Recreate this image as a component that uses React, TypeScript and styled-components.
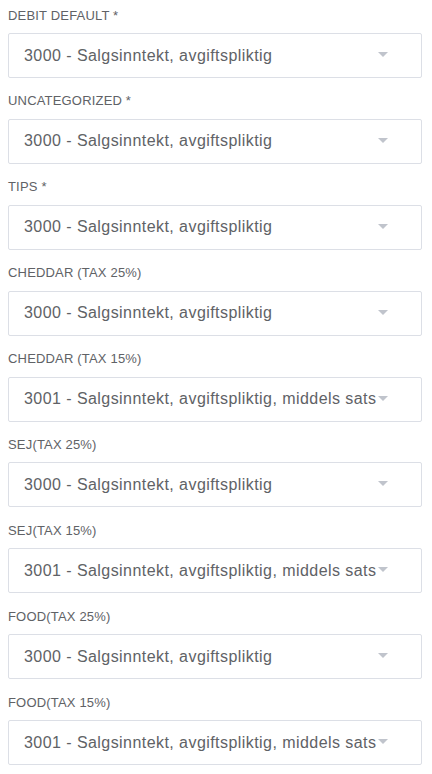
import styled, { createGlobalStyle } from 'styled-components';

const GlobalStyle = createGlobalStyle`
  html, body {
    margin: 0;
    padding: 0;
    background: #ffffff;
  }
  body {
    font-family: Arial, "Liberation Sans", Helvetica, sans-serif;
  }
`;

type Mapping = {
  label: string;
  value: string;
};

const mappings: Mapping[] = [
  { label: 'DEBIT DEFAULT *', value: '3000 - Salgsinntekt, avgiftspliktig' },
  { label: 'UNCATEGORIZED *', value: '3000 - Salgsinntekt, avgiftspliktig' },
  { label: 'TIPS *', value: '3000 - Salgsinntekt, avgiftspliktig' },
  { label: 'CHEDDAR (TAX 25%)', value: '3000 - Salgsinntekt, avgiftspliktig' },
  { label: 'CHEDDAR (TAX 15%)', value: '3001 - Salgsinntekt, avgiftspliktig, middels sats' },
  { label: 'SEJ(TAX 25%)', value: '3000 - Salgsinntekt, avgiftspliktig' },
  { label: 'SEJ(TAX 15%)', value: '3001 - Salgsinntekt, avgiftspliktig, middels sats' },
  { label: 'FOOD(TAX 25%)', value: '3000 - Salgsinntekt, avgiftspliktig' },
  { label: 'FOOD(TAX 15%)', value: '3001 - Salgsinntekt, avgiftspliktig, middels sats' },
];

const Form = styled.div`
  display: flex;
  flex-direction: column;
  padding: 0 10px 0 8px;
  font-family: Arial, "Liberation Sans", Helvetica, sans-serif;
`;

const Field = styled.div`
  display: flex;
  flex-direction: column;
  padding: 7.5px 0 7.875px;
`;

const Label = styled.label`
  font-size: 13px;
  line-height: 15px;
  letter-spacing: 0.18px;
  color: #606266;
  margin-bottom: 10.5px;
`;

const Select = styled.div`
  box-sizing: border-box;
  display: flex;
  align-items: center;
  height: 45px;
  padding: 0 33px 0 15px;
  border: 1px solid #dcdfe6;
  border-radius: 2px;
  background: #ffffff;
  cursor: pointer;
`;

const Value = styled.span`
  flex: 1;
  min-width: 0;
  overflow: hidden;
  white-space: nowrap;
  font-size: 16px;
  letter-spacing: 0.44px;
  color: #606266;
`;

const Caret = styled.svg`
  flex: none;
  width: 10px;
  height: 5px;
  margin-top: -2px;
`;

export default function App() {
  return (
    <>
      <GlobalStyle />
      <Form>
        {mappings.map((m) => (
          <Field key={m.label}>
            <Label>{m.label}</Label>
            <Select>
              <Value>{m.value}</Value>
              <Caret viewBox="0 0 10 5">
                <polygon points="0,0 10,0 5,5" fill="#c0c4cc" />
              </Caret>
            </Select>
          </Field>
        ))}
      </Form>
    </>
  );
}
